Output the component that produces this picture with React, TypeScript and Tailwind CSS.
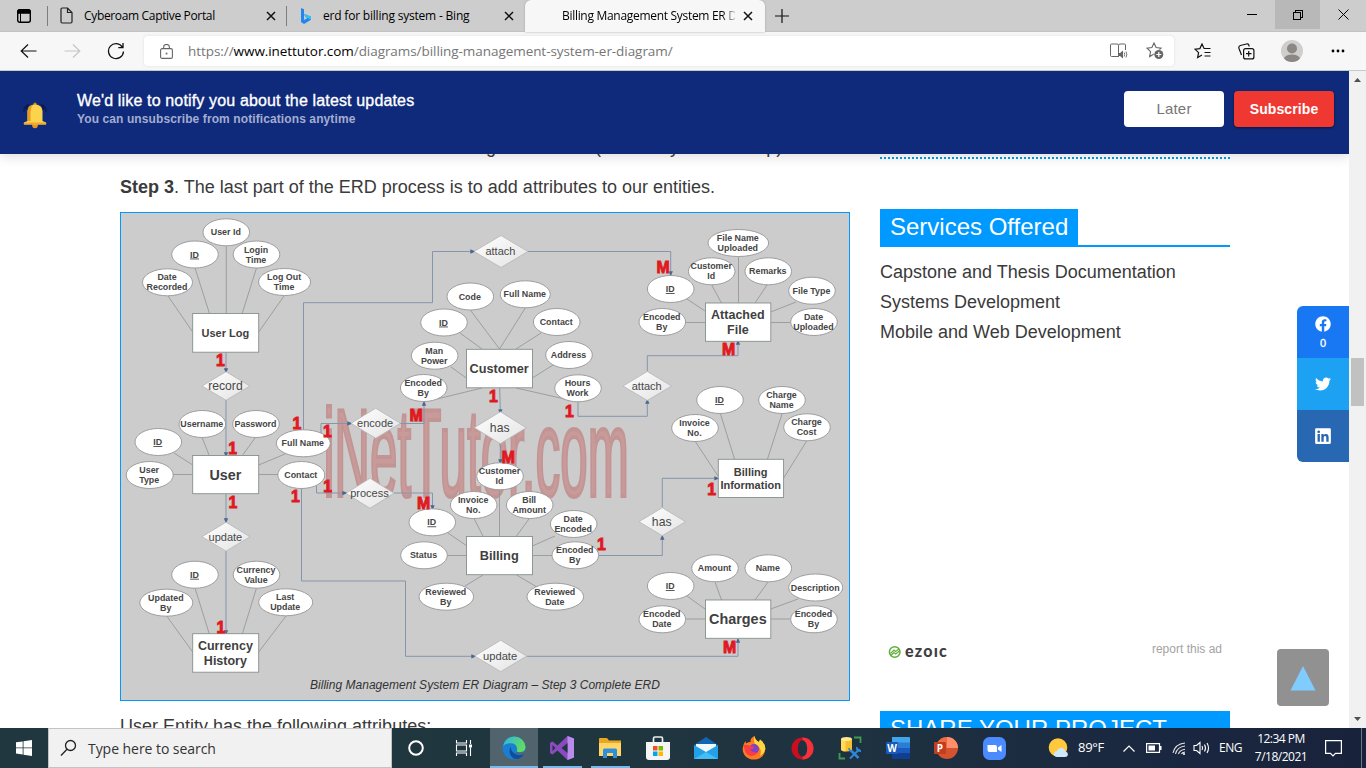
import React from "react";
import { FaFacebook, FaTwitter, FaLinkedin } from "react-icons/fa";

const UI = "font-['Open_Sans','Noto_Sans',sans-serif]";

type Ellipse = [number, number, number, string];
const ellipses: Ellipse[] = [
  [226.3, 232.3, 23.3, "User Id"],
  [195, 254.5, 23.3, "ID"],
  [256.5, 254.5, 23.3, "Login|Time"],
  [167.5, 282.3, 25, "Date|Recorded"],
  [284.6, 282, 26, "Log Out|Time"],
  [202.3, 424, 23.3, "Username"],
  [256, 424, 23.3, "Password"],
  [158.3, 442, 23.3, "ID"],
  [303.3, 443.3, 27, "Full Name"],
  [149.7, 475, 23.5, "User|Type"],
  [301.3, 475, 23.5, "Contact"],
  [195, 574.7, 23.3, "ID"],
  [256.5, 574.7, 23.3, "Currency|Value"],
  [166.3, 602.7, 26.5, "Updated|By"],
  [285.7, 602.3, 27, "Last|Update"],
  [470.3, 296.5, 23.3, "Code"],
  [525.3, 294.3, 25, "Full Name"],
  [444, 322.5, 23.3, "ID"],
  [556.7, 322, 23.3, "Contact"],
  [434.7, 355.7, 23.3, "Man|Power"],
  [569, 355, 23.3, "Address"],
  [423.7, 388, 23.3, "Encoded|By"],
  [578, 388.3, 23.3, "Hours|Work"],
  [500, 476.3, 23.3, "Customer|Id"],
  [473.7, 505, 23.3, "Invoice|No."],
  [529.7, 505, 23.3, "Bill|Amount"],
  [573.7, 524, 23.3, "Date|Encoded"],
  [432.3, 522.3, 23.3, "ID"],
  [424, 555.3, 23.3, "Status"],
  [575.3, 555.3, 23.3, "Encoded|By"],
  [446.3, 596.7, 27.3, "Reviewed|By"],
  [555.3, 596.7, 28.3, "Reviewed|Date"],
  [738.3, 243, 30.3, "File Name|Uploaded"],
  [711.7, 271.3, 23.3, "Customer|Id"],
  [768.3, 271.3, 23.3, "Remarks"],
  [670.7, 289, 23.3, "ID"],
  [812, 290.7, 23.3, "File Type"],
  [662.3, 322, 23.3, "Encoded|By"],
  [814, 322, 23.3, "Date|Uploaded"],
  [720, 400, 23.3, "ID"],
  [782, 400, 23.3, "Charge|Name"],
  [695, 428, 23.3, "Invoice|No."],
  [807, 427.3, 23.3, "Charge|Cost"],
  [715, 568.3, 23.3, "Amount"],
  [768.3, 568.3, 23.3, "Name"],
  [670.7, 586, 23.3, "ID"],
  [815.7, 587.5, 27, "Description"],
  [662.3, 619.3, 23.3, "Encoded|Date"],
  [814, 619.3, 23.3, "Encoded|By"],
];

type Entity = [number, number, number, number, string, number];
const entities: Entity[] = [
  [192.7, 313.5, 66, 38.7, "User Log", 11],
  [192.7, 455.5, 66, 38.2, "User", 14.3],
  [192.7, 633.7, 66, 38.5, "Currency|History", 12.5],
  [466.5, 349.3, 66, 38.5, "Customer", 12.7],
  [466.5, 536.5, 66, 38.2, "Billing", 12.8],
  [705.5, 303, 65.3, 38.3, "Attached|File", 12.5],
  [718.3, 459.3, 65.3, 38.2, "Billing|Information", 11],
  [705.5, 600, 65.3, 38.3, "Charges", 14.4],
];

type Diamond = [number, number, number, number, string, number];
const diamonds: Diamond[] = [
  [226, 386, 24, 14.3, "record", 12.2],
  [226, 536.7, 24, 14.5, "update", 11],
  [501, 251.5, 27, 16, "attach", 11],
  [375.7, 423.3, 24.7, 15, "encode", 11],
  [500.3, 427.7, 26, 16, "has", 12.2],
  [370, 493.3, 24, 15, "process", 11],
  [500.7, 656, 26, 15.7, "update", 11.2],
  [647.3, 386, 24.3, 14.5, "attach", 11],
  [662.3, 521.7, 23.3, 14, "has", 12.2],
];

const attributeLines: [number, number, number, number][] = [
  [195, 268, 209.3, 313], [226.3, 246, 226.3, 313], [256.5, 268, 242.3, 313], [168, 296, 192.7, 332], [284, 296, 258.7, 332],
  [202.3, 438, 209, 455], [255, 438, 242.7, 455], [174, 453, 192.7, 465], [285, 454, 258.7, 465], [173, 474.5, 192.7, 474.5], [258.7, 474.5, 278, 474.5],
  [195, 588, 209.3, 634], [256.5, 588, 242.3, 634], [166.7, 616, 192.7, 652], [286, 616, 258.7, 652],
  [470.3, 310, 499.5, 349], [525.3, 308, 499.5, 349], [460, 333, 482, 349], [541, 333, 516, 349], [451, 367, 466.3, 378], [553, 365, 532.3, 378], [437, 399, 482, 388], [565, 399, 516, 388],
  [473.7, 518, 483, 536], [529.7, 518, 516.5, 536], [448, 533, 466.3, 545.5], [555, 536, 532.3, 546], [447, 555.5, 466.3, 555.5], [532.3, 555.5, 552, 555.5], [465, 586, 483, 575], [537, 587, 516.5, 575], [499.5, 489, 499.5, 536],
  [738.5, 257, 738.5, 303], [711.7, 285, 721.5, 303], [767, 285, 755, 303], [687, 299, 705, 311], [796, 302, 770.7, 312], [686, 322.5, 705, 322.5], [770.7, 322.5, 790, 322.5],
  [720.5, 414, 734.5, 459], [782, 414, 767.5, 459], [695, 441, 718, 476], [806.7, 441, 783.7, 478],
  [715, 582, 721.5, 600], [768, 582, 755, 600], [687, 596, 705, 609], [798, 599, 770.7, 609], [686, 619, 705, 619], [770.7, 619, 790, 619],
];

const connectors: string[] = [
  "M226 352V370", "M226 400V454", "M226 494V520", "M226 551V632",
  "M303.5 430V302.7H432.5V251.5H472", "M670.7 251.5V273",
  "M321 433V423.5H349", "M400 423.5H424V404",
  "M316.5 486V493H344", "M394 493H432.5V507",
  "M301.5 488V581H405.5V656.3H473",
  "M527 656.3H738V641",
  "M499.7 388L500.3 411", "M500.3 443V461",
  "M578 402V416.3H647.3V402", "M647.3 371V355.7H738V343",
  "M599 555.5H662.3V538", "M662.3 507V478.3H716",
];

const markers: [number, number, string][] = [
  [220.5, 365, "1"], [232.7, 453.5, "1"], [297, 428, "1"], [327.5, 436, "1"], [233, 507.7, "1"], [295.3, 501.3, "1"],
  [327.7, 491, "1"], [221, 632, "1"], [493.5, 401, "1"], [416, 420.7, "M"], [569.5, 416, "1"], [508.3, 462.7, "M"],
  [423.7, 508, "M"], [601.5, 549.7, "1"], [663, 272.3, "M"], [728.7, 354.3, "M"], [711.7, 494.3, "1"], [729.7, 652.3, "M"],
];

function Label({ x, y, text, size, step, fill, bold = true }: { x: number; y: number; text: string; size: number; step: number; fill: string; bold?: boolean }) {
  const lines = text.split("|");
  const first = y - ((lines.length - 1) * step) / 2 + size * 0.35;
  return (
    <>
      {lines.map((line, i) => (
        <text key={i} x={x} y={first + i * step} fontSize={size} fill={fill} fontWeight={bold ? 700 : 400} textAnchor="middle" textDecoration={line === "ID" ? "underline" : undefined}>
          {line}
        </text>
      ))}
    </>
  );
}

function Erd() {
  return (
    <svg viewBox="121 213 728 461" width="728" height="461" className="block font-['Liberation_Sans',sans-serif]">
      <defs>
        <marker id="arrow" viewBox="0 0 6 6" refX="2" refY="3" markerWidth="5" markerHeight="5" markerUnits="userSpaceOnUse" orient="auto">
          <path d="M0 0.4L6 3L0 5.6z" fill="#4a6690" />
        </marker>
        <linearGradient id="dia" x1="0" y1="0" x2="1" y2="1">
          <stop offset="0" stopColor="#ffffff" />
          <stop offset="1" stopColor="#e3e3e3" />
        </linearGradient>
      </defs>
      <text transform="translate(323.4 496) scale(0.3965 1)" fontSize="124.5" fill="#c99a9a" stroke="#c29595" strokeWidth="4">iNetTutor.com</text>
      <g stroke="#999" strokeWidth="0.9">
        {attributeLines.map(([a, b, c, d], i) => <line key={i} x1={a} y1={b} x2={c} y2={d} />)}
      </g>
      <path d="M528 251.5H670.7" stroke="#8496ab" fill="none" />
      <g stroke="#8496ab" strokeWidth="1" fill="none">
        {connectors.map((d) => <path key={d} d={d} markerEnd="url(#arrow)" />)}
      </g>
      {diamonds.map(([x, y, w, h, t, s], i) => (
        <g key={i}>
          <path d={`M${x - w} ${y}L${x} ${y - h}L${x + w} ${y}L${x} ${y + h}Z`} fill="url(#dia)" stroke="#b5b5b5" strokeWidth="0.8" />
          <Label x={x - 0.6} y={y} text={t} size={s} step={12} fill="#484848" bold={false} />
        </g>
      ))}
      {ellipses.map(([x, y, rx, t], i) => (
        <g key={i}>
          <ellipse cx={x} cy={y} rx={rx} ry="13.5" fill="#fff" stroke="#959595" strokeWidth="0.9" />
          <Label x={x - 0.5} y={y - 0.1} text={t} size={8.9} step={10} fill="#454545" />
        </g>
      ))}
      {entities.map(([x, y, w, h, t, s], i) => (
        <g key={i}>
          <rect x={x} y={y} width={w} height={h} fill="#fff" stroke="#85908a" strokeWidth="0.9" />
          <Label x={x + w / 2 - 0.3} y={y + h / 2} text={t} size={s} step={t.startsWith("Billing|") ? 13 : 14.5} fill="#404040" />
        </g>
      ))}
      <g fontSize="15.8" fontWeight="700" fill="#f0141c" stroke="#d81c22" strokeWidth="0.9" textAnchor="middle">
        {markers.map(([x, y, t], i) => <text key={i} x={x} y={y + 0.5}>{t}</text>)}
      </g>
    </svg>
  );
}

function Cross({ className = "" }: { className?: string }) {
  return (
    <svg width="10" height="10" viewBox="0 0 10 10" className={`shrink-0 ${className}`}>
      <path d="M1 1L9 9M9 1L1 9" stroke="#111" strokeWidth="1.5" />
    </svg>
  );
}

function TabBar() {
  return (
    <div className="flex h-8 shrink-0 border-b border-[#c2c2c2] bg-[#cdcdcd] text-[12px] text-black">
      <div className="flex w-[47px] items-center pl-[17px]">
        <svg width="14" height="14" viewBox="0 0 14 14"><rect x=".7" y=".7" width="12.6" height="12.6" rx="2" fill="none" stroke="#000" strokeWidth="1.4" /><path d="M1 1h12v3.2H1zM3.5 4v9" stroke="#000" strokeWidth="1" /></svg>
      </div>
      <div className="mt-[6px] h-5 w-px bg-[#7d7d7d]" />
      <div className="flex w-[238px] items-center">
        <svg width="13" height="17" viewBox="0 0 13 17" className="ml-3 shrink-0"><path d="M1 2.2Q1 1 2.2 1H7.5L12 5.5V14.8Q12 16 10.8 16H2.2Q1 16 1 14.8ZM7.5 1V5.5H12" fill="none" stroke="#222" strokeWidth="1.2" /></svg>
        <span className="ml-[11px] flex-1 whitespace-nowrap tracking-[-0.34px]">Cyberoam Captive Portal</span>
        <Cross className="mr-[10px]" />
      </div>
      <div className="mt-[6px] h-5 w-px bg-[#7d7d7d]" />
      <div className="flex w-[238px] items-center">
        <svg width="12" height="16" viewBox="0 0 12 16" className="ml-[13px] shrink-0"><path d="M1 0L4 1.2V12L7.5 10L5.2 8.8L4.2 6L11 8.4V11.8L4 16L1 14Z" fill="#2385ee" /><path d="M4.2 6L11 8.4V11.8L7.5 10L5.2 8.8Z" fill="#35c2ee" /></svg>
        <span className="ml-[11px] flex-1 whitespace-nowrap tracking-[-0.2px]">erd for billing system - Bing</span>
        <Cross className="mr-[11px]" />
      </div>
      <div className="-mb-px flex w-[240px] items-center rounded-t-[6px] bg-[#f7f7f7] shadow-[0_0_2px_#9a9a9a]">
        <span className="ml-[37px] w-[173px] overflow-hidden whitespace-nowrap tracking-[-0.3px] [mask-image:linear-gradient(to_right,black_160px,transparent_176px)]">Billing Management System ER Diagram</span>
        <Cross className="ml-[8px]" />
      </div>
      <svg width="14" height="14" viewBox="0 0 14 14" className="ml-[10px] mt-[9px]"><path d="M7 0V14M0 7H14" stroke="#111" strokeWidth="1.2" /></svg>
      <div className="ml-auto flex h-[29px]">
        <div className="grid w-[46px] place-items-center"><div className="h-px w-[10px] bg-black" /></div>
        <div className="grid w-[45px] place-items-center bg-[#b8b8b8]">
          <svg width="10" height="10" viewBox="0 0 10 10" shapeRendering="crispEdges"><path d="M.5 2.5h7v7h-7zM2.5 2.5v-2h7v7h-2" fill="none" stroke="#000" /></svg>
        </div>
        <div className="grid w-[46px] place-items-center"><svg width="11" height="11" viewBox="0 0 11 11"><path d="M.5.5L10.5 10.5M10.5.5L.5 10.5" stroke="#000" /></svg></div>
      </div>
    </div>
  );
}

const STAR = "M8 1L10.1 5.6L15 6.2L11.4 9.6L12.4 14.6L8 12.1L3.6 14.6L4.6 9.6L1 6.2L5.9 5.6Z";

function Toolbar() {
  return (
    <div className="flex h-[39px] shrink-0 items-center border-b border-[#c9c9c9] bg-[#f7f7f7]">
      <svg width="17" height="14" viewBox="0 0 17 14" className="ml-5"><path d="M8 0.5L1.2 7L8 13.5M1.2 7H16.5" fill="none" stroke="#111" strokeWidth="1.2" /></svg>
      <svg width="17" height="14" viewBox="0 0 17 14" className="ml-[27px]"><path d="M9 0.5L15.8 7L9 13.5M15.8 7H0.5" fill="none" stroke="#c6c6c6" strokeWidth="1.2" /></svg>
      <svg width="18" height="18" viewBox="0 0 18 18" className="ml-[26px]"><path d="M15.5 5.3A7.5 7.5 0 1 0 16.5 9.5M16 1V5.7H11.3" fill="none" stroke="#111" strokeWidth="1.3" /></svg>
      <div className="ml-[19px] flex h-[30px] w-[1030px] items-center rounded-[4px] bg-white shadow-[0_0_3px_#dddddd]">
        <svg width="13" height="15" viewBox="0 0 13 15" className="ml-4 shrink-0"><rect x=".6" y="4.6" width="11.8" height="9.8" rx="1.5" fill="none" stroke="#666" strokeWidth="1.1" /><path d="M3.6 4.5V3.3a2.9 2.9 0 0 1 5.8 0v1.2" fill="none" stroke="#666" strokeWidth="1.1" /><rect x="5.7" y="8.7" width="1.7" height="1.7" fill="#666" /></svg>
        <span className="ml-[15px] flex-1 whitespace-nowrap text-[13.5px] tracking-[-0.06px] text-[#767676]">https://<span className="text-black">www.inettutor.com</span>/diagrams/billing-management-system-er-diagram/</span>
        <svg width="18" height="16" viewBox="0 0 18 16" className="mr-[18px] shrink-0"><path d="M9 13.5H1.5q-1 0-1-1V2q0-1 1-1H7q1.5 0 1.5 1.5V13M8.5 2.5Q8.5 1 10 1h4.5q1 0 1 1V7" fill="none" stroke="#666" /><path d="M8.5 10H10l3-2.5v8L10 13H8.5z" fill="#666" /><path d="M14.2 9.5q1 2 0 4M16 8.500q1.700 3 0 6" fill="none" stroke="#666" strokeWidth=".9" /></svg>
        <svg width="18" height="18" viewBox="0 0 18 18" className="mr-[10px] shrink-0"><path d={STAR} fill="none" stroke="#666" strokeWidth="1.1" /><circle cx="12.8" cy="12.5" r="5" fill="#fff" /><circle cx="12.8" cy="12.5" r="4.5" fill="#666" /><path d="M12.8 10v5M10.3 12.5h5" stroke="#fff" strokeWidth="1.2" /></svg>
      </div>
      <svg width="17" height="16" viewBox="0 0 17 16" className="ml-5"><path d="M9.5 4.3L8 1L5.9 5.6L1 6.2L4.6 9.6L3.6 14.6L8 12.1M9.5 4.3L10.1 5.5H16.5M10.5 9.5H16.5M10.5 13H16.5" fill="none" stroke="#111" strokeWidth="1.2" /></svg>
      <svg width="17" height="17" viewBox="0 0 17 17" className="ml-[27px]"><rect x="5.6" y="5.6" width="10.3" height="10.3" rx="2" fill="none" stroke="#111" strokeWidth="1.2" /><path d="M10.7 8v5.5M8 10.7h5.5M3.5 12L1 5.5Q.3 3.3 2.3 2.5L8.5 1Q10.5 .5 11 2.5L11.3 3.5" fill="none" stroke="#111" strokeWidth="1.2" /></svg>
      <svg width="22" height="22" viewBox="0 0 22 22" className="ml-[26px]"><clipPath id="av"><circle cx="11" cy="11" r="11" /></clipPath><circle cx="11" cy="11" r="11" fill="#d0cecb" /><g clipPath="url(#av)" fill="#8b8784"><circle cx="11" cy="8.5" r="5" /><ellipse cx="11" cy="19" rx="8" ry="4.5" /></g></svg>
      <svg width="14" height="4" viewBox="0 0 14 4" className="ml-[28px]"><circle cx="2" cy="2" r="1.4" /><circle cx="7" cy="2" r="1.4" /><circle cx="12" cy="2" r="1.4" /></svg>
    </div>
  );
}

function Banner() {
  return (
    <div className="relative z-10 flex h-[83px] shrink-0 bg-[#102a7b] shadow-[0_2px_12px_rgba(0,0,0,0.15)]">
      <svg width="26" height="28" viewBox="0 0 26 28" className="ml-[22px] mt-[30px]">
        <path d="M5 4Q1.5 7 2 11M7 3Q4 6 4.5 9M21 4Q24.5 7 24 11M19 3Q22 6 21.5 9" fill="none" stroke="#0a1a50" strokeWidth="1.3" />
        <circle cx="13" cy="24.5" r="2.8" fill="#e8961e" /><circle cx="13" cy="3.2" r="1.7" fill="#c98a1e" />
        <path d="M5.5 20V10Q6 3.5 13 3.5T20.5 10V20L24 21.5Q25 23.5 23.5 23.5H2.5Q1 23.5 2 21.5Z" fill="#fbd34d" />
        <path d="M5.5 20V10Q6 4.5 11 3.8Q8.5 7 8.5 11V20Z" fill="#eb9b1f" />
        <path d="M2 21.5H24V23.5H2Z" fill="#f2a92b" />
      </svg>
      <div className="ml-[29px] flex-1 pt-5">
        <div className="text-[16px] leading-5 tracking-[0.15px] text-white [-webkit-text-stroke:0.35px_white]">We'd like to notify you about the latest updates</div>
        <div className="text-[12px] font-bold leading-4 tracking-[0.1px] text-[#a3add0]">You can unsubscribe from notifications anytime</div>
      </div>
      <div className="mr-[15px] mt-5 flex h-9 gap-[10px]">
        <div className="grid w-[100px] place-items-center rounded-[4px] bg-white text-[15px] tracking-[0.2px] text-[#767676]">Later</div>
        <div className="grid w-[100px] place-items-center rounded-[4px] bg-[#ef3832] text-[14px] font-bold tracking-[0.1px] text-white shadow-[0_1px_3px_rgba(0,0,0,0.5)]">Subscribe</div>
      </div>
    </div>
  );
}

function Sidebar() {
  return (
    <aside className="w-[350px] shrink-0">
      <svg width="350" height="2" className="mt-[3px] block" shapeRendering="crispEdges"><path d="M0 1H350" stroke="#0099ff" strokeWidth="2" strokeDasharray="2 2" /></svg>
      <div className="mt-[50px] flex h-[38px] border-b-2 border-[#0099ff]">
        <h3 className="w-[198px] bg-[#0099ff] pl-[10px] text-[24px] leading-[36px] text-white">Services Offered</h3>
      </div>
      <ul className="mt-[10px] text-[18px] leading-[30px] text-[#3a3a3a]">
        <li>Capstone and Thesis Documentation</li>
        <li>Systems Development</li>
        <li>Mobile and Web Development</li>
      </ul>
      <div className="mt-[289px] flex h-[28px] items-center px-[8px]">
        <svg width="14" height="14" viewBox="0 0 14 14" className="mt-[3px]"><circle cx="6.7" cy="7" r="5.3" fill="none" stroke="#5fae3b" strokeWidth="1.5" /><path d="M2.5 8.5L6 5L7.5 6.5L11 4M3 10.5L6 7.5L7.7 9L11.5 6" fill="none" stroke="#5fae3b" strokeWidth="1.2" /></svg>
        <span className="ml-[3px] mt-[1px] font-['Lato',sans-serif] text-[16px] font-black leading-4 tracking-[1.2px] text-[#404040]">ezoıc</span>
        <span className="-mt-[2px] ml-auto text-[12px] text-[#a3a3a3]">report this ad</span>
      </div>
      <h3 className="mt-[47px] h-[60px] bg-[#0099ff] pl-[10px] text-[24px] leading-[35px] text-white">SHARE YOUR PROJECT</h3>
    </aside>
  );
}

function Task({ children, active = false, line = false }: { children: React.ReactNode; active?: boolean; line?: boolean }) {
  return (
    <div className={`flex h-10 w-12 flex-col items-center ${active ? "bg-[#51646d]" : ""}`}>
      <div className="grid h-[38px] w-full place-items-center pt-[2px]">{children}</div>
      {line && <div className={`h-[2px] bg-[#76b9ed] ${active ? "w-full" : "w-[39px]"}`} />}
    </div>
  );
}

function Taskbar() {
  return (
    <div className={`flex h-10 shrink-0 bg-[linear-gradient(90deg,#20373f_0%,#20363f_45%,#1d3140_65%,#1a2740_85%,#19223b_100%)] text-white ${UI}`}>
      <div className="grid w-12 place-items-center"><svg width="16" height="16" viewBox="0 0 16 16"><path d="M0 2.3L6.7 1.4V7.5H0ZM7.5 1.3L16 0V7.5H7.5ZM0 8.3H6.7V14.5L0 13.5ZM7.5 8.3H16V16L7.5 14.7Z" fill="#fff" /></svg></div>
      <div className="flex w-[344px] items-center border border-[#c3c3c3] bg-[#f1f1f1] text-[#333]">
        <svg width="17" height="18" viewBox="0 0 17 18" className="ml-[11px]"><circle cx="10.5" cy="6.5" r="5" fill="none" stroke="#222" strokeWidth="1.3" /><path d="M7 10.2L1 16.5" stroke="#222" strokeWidth="1.3" /></svg>
        <span className="ml-[11px] text-[14px] tracking-[-0.05px]">Type here to search</span>
      </div>
      <Task><svg width="18" height="18" viewBox="0 0 18 18"><circle cx="9" cy="9" r="6.8" fill="none" stroke="#fff" strokeWidth="2" /></svg></Task>
      <Task><svg width="18" height="16" viewBox="0 0 18 16"><path d="M1.5 0V3H11.5V0M1.5 16V13H11.5V16M1.5 5H11.5V11H1.5ZM15.5 0V4M15.5 7.5V16" fill="none" stroke="#fff" strokeWidth="1.1" /><rect x="14" y="4.5" width="3" height="3" fill="#fff" /></svg></Task>
      <div className="ml-[2px] flex">
        <Task active line>
          <svg width="24" height="24" viewBox="0 0 24 24"><defs><linearGradient id="eg" x1="0" y1="0" x2="1" y2=".5"><stop offset="0" stopColor="#2cb3e8" /><stop offset="1" stopColor="#62dc60" /></linearGradient></defs><circle cx="12" cy="12" r="11.5" fill="#1a7fd0" /><path d="M1 10.5A11.3 11.3 0 0 1 23.5 11C23.5 16 18 17 14.5 15.5C15.8 13.5 15.5 8.5 10.5 7.5C6 6.8 2 8.5 1 10.5Z" fill="url(#eg)" /><path d="M9 10.5Q5 17 11.5 22.5Q18 24.5 22 18Q17 20.5 12.5 17.5Q8.5 15 9 10.5Z" fill="#0d4f9e" /><path d="M14.5 15.5Q16 17 19 16.8L23 15.5L22 18Q17 20 13.5 17Z" fill="#51646d" /></svg>
        </Task>
        <Task line><svg width="24" height="24" viewBox="0 0 24 24"><path d="M17.5 0L24 2.5V21.5L17.5 24L7.5 14.5L2.5 18.5L0 17.2V6.8L2.5 5.5L7.5 9.5Z" fill="#8a4bc0" /><path d="M17.5 0L24 2.5V21.5L17.5 24Z" fill="#b98bea" /><path d="M17.5 7L11.5 12L17.5 17ZM2.5 9V15L5.5 12Z" fill="#20353f" /></svg></Task>
        <Task line><svg width="22" height="20" viewBox="0 0 22 20"><path d="M0 1Q0 0 1 0H8L10 2.5H22V18H0Z" fill="#e9a820" /><path d="M0 5H22V18H0Z" fill="#ffd667" /><path d="M4 20V12Q4 10.5 5.5 10.5H16.5Q18 10.5 18 12V20H14V15H8V20Z" fill="#2e8fdc" /></svg></Task>
        <Task><svg width="24" height="24" viewBox="0 0 24 24"><path d="M7.5 7V2.5Q7.5 1 9 1H15Q16.5 1 16.5 2.5V7" fill="none" stroke="#eee" strokeWidth="1.7" /><path d="M0 6H24V21Q24 24 21 24H3Q0 24 0 21Z" fill="#f5f5f5" /><path d="M7 10H11.5V14.5H7Z" fill="#f25022" /><path d="M12.5 10H17V14.5H12.5Z" fill="#7fba00" /><path d="M7 15.5H11.5V20H7Z" fill="#00a4ef" /><path d="M12.5 15.5H17V20H12.5Z" fill="#ffb900" /></svg></Task>
        <Task><svg width="24" height="22" viewBox="0 0 24 22"><path d="M0 8L12 0L24 8V22H0Z" fill="#1265b0" /><path d="M2 7H22V15H2Z" fill="#f2f7fb" /><path d="M0 8L12 15L24 8V22H0Z" fill="#22a1e8" /><path d="M12 15L24 22H0Z" fill="#45bdf5" /></svg></Task>
        <Task><svg width="24" height="24" viewBox="0 0 24 24"><path d="M12 23.5C5 23.5 .5 18.5 .7 12.5Q1 8 3.5 5L4 7.5Q6 5.5 8.5 6Q8 2 12.5 0Q13 4 17 6L18 3.5Q23.5 7.5 23.3 13C23 19.5 18 23.5 12 23.5Z" fill="#ff7a1f" /><path d="M12.5 0Q13 4 17 6L18 3.5Q23.5 7.5 23.3 13Q22 18 18 20Q21 12 13 8Q11 4 12.5 0Z" fill="#ffd83f" /><circle cx="12" cy="13" r="5" fill="#8143c4" /><path d="M2 9Q5 8 8 10Q12 10 12 12L8 13.5Q11 18 16 16Q12 22 6 19Q2 16 2 9Z" fill="#fb3e44" /></svg></Task>
        <Task><svg width="23" height="23" viewBox="0 0 23 23"><circle cx="11.5" cy="11.5" r="11" fill="#c80f20" /><path d="M11.5 .5A11 11 0 0 1 11.5 22.5Z" fill="#f5313c" /><ellipse cx="11.5" cy="11.5" rx="4.7" ry="8.2" fill="#1e3340" /></svg></Task>
        <Task>
          <svg width="24" height="24" viewBox="0 0 24 24"><path d="M16 1.5H22.5V7M1.5 17V22.5H7" fill="none" stroke="#3f9c4b" strokeWidth="1.8" /><path d="M3 3V14Q8.5 17 14 14V3Z" fill="#f4be2d" /><path d="M3 3V14Q5 15.5 7.5 15.6V3Z" fill="#ffd95c" /><ellipse cx="8.5" cy="3" rx="5.5" ry="2" fill="#ffe88f" /><path d="M13 14.5L20.5 22" stroke="#2f86d6" strokeWidth="2.5" /><path d="M21.5 13L12 22.5" stroke="#2f86d6" strokeWidth="2" /><path d="M11 12Q11.5 16 15 15.5M19 11Q18 15 23 15" fill="none" stroke="#2f86d6" strokeWidth="1.8" /></svg>
        </Task>
        <Task><svg width="24" height="22" viewBox="0 0 24 22"><path d="M6 0H23Q24 0 24 1V6H6Z" fill="#41a5ee" /><path d="M6 5.5H24V11H6Z" fill="#2b7cd3" /><path d="M6 11H24V16.5H6Z" fill="#185abd" /><path d="M6 16.5H24V21Q24 22 23 22H6Z" fill="#103f91" /><rect y="5" width="12" height="12" rx="1" fill="#185abd" /><text x="6" y="14.5" fontSize="10" fontWeight="700" fill="#fff" textAnchor="middle">W</text></svg></Task>
        <Task><svg width="24" height="22" viewBox="0 0 24 22"><circle cx="13" cy="11" r="11" fill="#d35230" /><path d="M13 0A11 11 0 0 0 2 11H13Z" fill="#ed6c47" /><path d="M13 0A11 11 0 0 1 24 11H13Z" fill="#ff8f6b" /><rect y="5" width="12" height="12" rx="1" fill="#c43e1c" /><text x="6" y="14.5" fontSize="10" fontWeight="700" fill="#fff" textAnchor="middle">P</text></svg></Task>
        <Task><svg width="23" height="23" viewBox="0 0 23 23"><rect width="23" height="23" rx="6.5" fill="#4a8cff" /><path d="M4.5 8H12Q14 8 14 10V15H6.5Q4.5 15 4.5 13ZM15 10.5L18.5 8V15L15 12.5Z" fill="#fff" /></svg></Task>
      </div>
      <div className="ml-auto flex items-center text-[12px]">
        <svg width="22" height="20" viewBox="0 0 22 20"><circle cx="10" cy="9.5" r="9.3" fill="#ffc83d" /><path d="M9 19Q5.5 18.5 6 15.5Q6.5 13 9 13Q10 9.5 14 10Q17 10.5 17.3 13.5Q20 14 20 16.5Q19.5 19 17 19Z" fill="#cfe7fb" /></svg>
        <span className="ml-[8px] w-[28px] whitespace-nowrap text-[13px] tracking-[-0.3px]">89°F</span>
        <svg width="12" height="7" viewBox="0 0 12 7" className="ml-[17px]"><path d="M.5 6.5L6 1L11.5 6.5" fill="none" stroke="#fff" strokeWidth="1.2" /></svg>
        <svg width="16" height="10" viewBox="0 0 16 10" className="ml-[11px]"><path d="M.6 .6H13.5V9.4H.6Z" fill="none" stroke="#fff" strokeWidth="1.2" /><path d="M2.5 2.5H9V7.5H2.5ZM14 3H15.5V7H14Z" fill="#fff" /></svg>
        <svg width="14" height="13" viewBox="0 0 14 13" className="ml-[10px]"><path d="M1 11Q3 2 13 1M3.5 12Q5 5 13 4M6.5 12Q7.5 8 13 7.2M9.5 12Q10 10.5 13 10" fill="none" stroke="#e8e8e8" strokeWidth="1.1" /><circle cx="12" cy="12" r="1" fill="#fff" /></svg>
        <svg width="18" height="14" viewBox="0 0 18 14" className="ml-[7px]"><path d="M1 4.5H3.5L7 1.5V12.5L3.5 9.5H1ZM9 5Q10.2 7 9 9M11.5 3.5Q13.5 7 11.5 10.5M14 2Q17 7 14 12" fill="none" stroke="#fff" strokeWidth="1.1" /></svg>
        <span className="ml-[8px] w-[23px] whitespace-nowrap tracking-[-0.5px]">ENG</span>
        <div className="ml-[12px] w-[54px] whitespace-nowrap text-center text-[12px] leading-[18px] tracking-[-0.5px]"><div>12:34 PM</div><div>7/18/2021</div></div>
        <svg width="17" height="17" viewBox="0 0 17 17" className="ml-[17px]"><path d="M.6 .6H16.4V13.4H10.5L8 16L5.5 13.4H.6Z" fill="none" stroke="#fff" strokeWidth="1.2" /></svg>
        <div className="ml-[19px] mr-1 h-10 w-px bg-[#6d7483]" />
      </div>
    </div>
  );
}

export default function App() {
  return (
    <div className="flex h-[768px] w-[1366px] flex-col overflow-hidden bg-white font-['Liberation_Sans',sans-serif]">
      <div className={`shrink-0 ${UI}`}>
        <TabBar />
        <Toolbar />
      </div>
      <div className="flex min-h-0 flex-1">
        <div className="relative flex min-w-0 flex-1 flex-col overflow-hidden">
          <Banner />
          <main className="flex min-h-0 flex-1 gap-[30px] overflow-hidden pl-[120px] text-[18px] leading-[30px] text-[#3a3a3a]">
            <article className="w-[730px] shrink-0">
              <p className="-mt-[22px] whitespace-nowrap pl-[328px]">Billing information (has many relationship)</p>
              <p className="mt-[10px]"><b>Step 3</b>. The last part of the ERD process is to add attributes to our entities.</p>
              <figure className="mt-[10px] h-[489px] border border-[#0099ff] bg-[#ccc]">
                <Erd />
                <figcaption className="-mt-px text-center text-[12px] italic leading-[24px] tracking-[0.02px] text-[#333]">Billing Management System ER Diagram – Step 3 Complete ERD</figcaption>
              </figure>
              <p className="mt-[10px]">User Entity has the following attributes:</p>
            </article>
            <Sidebar />
          </main>
          <div className="absolute right-0 top-[235px] flex flex-col overflow-hidden rounded-l-[6px] text-white">
            <div className="flex h-[52px] w-[52px] flex-col items-center bg-[#1877f2] pt-[10px]"><FaFacebook size={16} /><span className="mt-[3px] text-[11px] leading-4 [-webkit-text-stroke:0.3px_white]">0</span></div>
            <div className="grid h-[52px] w-[52px] place-items-center bg-[#1da1f2]"><FaTwitter size={16} /></div>
            <div className="grid h-[52px] w-[52px] place-items-center bg-[#2867b2]"><FaLinkedin size={18} /></div>
          </div>
          <div className="absolute bottom-[22px] right-5 grid h-[57px] w-[52px] place-items-center rounded-[4px] bg-[#919191]">
            <svg width="26" height="26" viewBox="0 0 26 26"><path d="M13 1L25.5 25.5H.5Z" fill="#80ccff" /></svg>
          </div>
        </div>
        <div className="flex w-[17px] shrink-0 flex-col items-center bg-[#f1f1f1]">
          <svg width="7" height="4" viewBox="0 0 7 4" className="mt-[7px]"><path d="M0 4L3.5 0L7 4Z" fill="#505050" /></svg>
          <div className="mt-[276px] h-12 w-[13px] bg-[#c1c1c1]" />
          <svg width="7" height="4" viewBox="0 0 7 4" className="mb-[7px] mt-auto"><path d="M0 0H7L3.5 4Z" fill="#505050" /></svg>
        </div>
      </div>
      <Taskbar />
    </div>
  );
}
